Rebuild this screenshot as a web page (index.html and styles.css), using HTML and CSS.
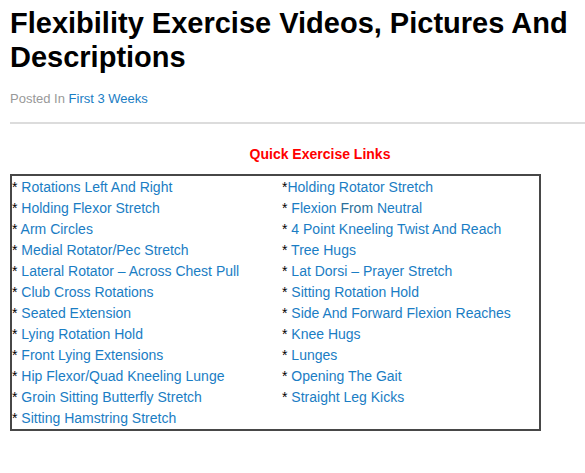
FILE: index.html
```html
<!DOCTYPE html>
<html>
<head>
<meta charset="utf-8">
<link rel="stylesheet" href="styles.css">
</head>
<body>
<div class="page">
  <h1 class="title">Flexibility Exercise Videos, Pictures And Descriptions</h1>
  <p class="meta">Posted In <a class="link" href="#">First 3 Weeks</a></p>
  <hr class="rule">
  <h4 class="quick">Quick Exercise Links</h4>
  <div class="box">
    <ul class="col col-left">
      <li>* <a href="#">Rotations Left And Right</a></li>
      <li>* <a href="#">Holding Flexor Stretch</a></li>
      <li>* <a href="#">Arm Circles</a></li>
      <li>* <a href="#">Medial Rotator/Pec Stretch</a></li>
      <li>* <a href="#">Lateral Rotator – Across Chest Pull</a></li>
      <li>* <a href="#">Club Cross Rotations</a></li>
      <li>* <a href="#">Seated Extension</a></li>
      <li>* <a href="#">Lying Rotation Hold</a></li>
      <li>* <a href="#">Front Lying Extensions</a></li>
      <li>* <a href="#">Hip Flexor/Quad Kneeling Lunge</a></li>
      <li>* <a href="#">Groin Sitting Butterfly Stretch</a></li>
      <li>* <a href="#">Sitting Hamstring Stretch</a></li>
    </ul>
    <ul class="col col-right">
      <li>*<a href="#">Holding Rotator Stretch</a></li>
      <li>* <a href="#">Flexion <span class="alt">From</span> Neutral</a></li>
      <li>* <a href="#">4 Point Kneeling Twist And Reach</a></li>
      <li>* <a href="#">Tree Hugs</a></li>
      <li>* <a href="#">Lat Dorsi – Prayer Stretch</a></li>
      <li>* <a href="#">Sitting Rotation Hold</a></li>
      <li>* <a href="#">Side And Forward Flexion Reaches</a></li>
      <li>* <a href="#">Knee Hugs</a></li>
      <li>* <a href="#">Lunges</a></li>
      <li>* <a href="#">Opening The Gait</a></li>
      <li>* <a href="#">Straight Leg Kicks</a></li>
    </ul>
  </div>
</div>
</body>
</html>
```
FILE: styles.css
```css
html, body {
  margin: 0;
  padding: 0;
  background: #fff;
}
body {
  font-family: "Liberation Sans", Arial, sans-serif;
  color: #000;
}
.page {
  width: 575px;
  padding: 0 0 0 10px;
}
.title {
  margin: 6px 0 0 0;
  font-size: 29px;
  line-height: 34px;
  font-weight: bold;
  color: #000;
}
.meta {
  margin: 17px 0 0 0;
  font-size: 13px;
  line-height: 16px;
  color: #999;
}
.link, .box a {
  color: #1a7dc4;
  text-decoration: none;
}
.rule {
  margin: 15px 0 0 0;
  border: 0;
  height: 2px;
  background: #dcdcdc;
}
.quick {
  margin: 22px 0 0 0;
  padding-left: 45px;
  text-align: center;
  color: #f00;
  font-size: 14px;
  line-height: 16px;
  font-weight: bold;
}
.box {
  margin-top: 12px;
  width: 527px;
  border: 2px solid #474747;
  display: flex;
  padding: 1px 0 0 0;
  font-size: 14px;
  line-height: 21px;
  color: #000;
}
.col {
  list-style: none;
  margin: 0;
  padding: 0;
}
.col-left {
  width: 270px;
}
.col-right {
  flex: 1;
}
.alt {
  color: #2a6f9a;
}
```
